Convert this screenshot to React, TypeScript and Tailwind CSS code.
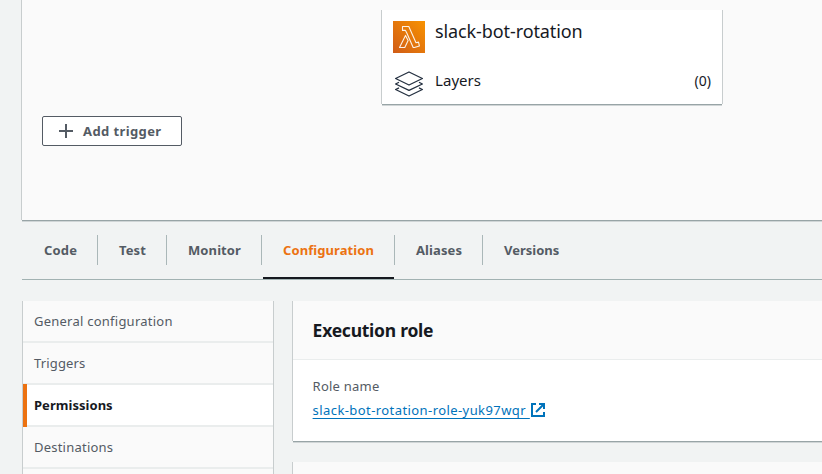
const shadow =
  "shadow-[0_1px_0_0_#98a4a6,0_2px_0_0_#d0d5d6,1px_0_0_0_#c8cdce,-1px_0_0_0_#c8cdce]";

function LambdaIcon() {
  return (
    <svg width="32" height="32" viewBox="0 0 32 32" className="block shrink-0">
      <defs>
        <linearGradient id="lambda" x1="0" y1="1" x2="1" y2="0">
          <stop offset="0" stopColor="#d05c17" />
          <stop offset="1" stopColor="#f89200" />
        </linearGradient>
      </defs>
      <rect width="32" height="32" fill="url(#lambda)" />
      <path
        d="M9.5 5.5h6.3l7.2 16.2 2.5-.6.9 3.8-5 1.6h-1.2L13.8 12l-1.3-2.6h-3zM12.5 14.4l2.6 5.2-3.3 6.9H6.5z"
        fill="none"
        stroke="#fff"
        strokeOpacity=".9"
        strokeWidth="1.1"
        strokeLinejoin="round"
      />
    </svg>
  );
}

function LayersIcon() {
  return (
    <svg width="30" height="26" viewBox="0 0 30 26" className="block shrink-0" fill="none" stroke="#243040" strokeWidth="1.3" strokeLinejoin="round">
      <path d="M15 1 28.4 7.5 15 14 1.6 7.5z" />
      <path d="M5 11.2 1.6 13 15 19.3 28.4 13 25 11.2" />
      <path d="M5 16.8 1.6 18.5 15 25 28.4 18.5 25 16.8" />
    </svg>
  );
}

function ExternalIcon() {
  return (
    <svg width="14" height="14" viewBox="0 0 14 14" className="ml-px block shrink-0" fill="none" stroke="#0073bb" strokeWidth="2">
      <path d="M5 1H1v12h12V9" />
      <path d="M8 1h5v5M13 1 5 9" />
    </svg>
  );
}

const tabs = [
  { label: "Code", width: "w-[76px]", pad: "pl-[22px] tracking-[0.2px]" },
  { label: "Test", width: "w-[69px]", pad: "pl-[21px] tracking-[0.1px]" },
  { label: "Monitor", width: "w-[95px]", pad: "pl-[21px] tracking-[0.1px]" },
  { label: "Configuration", width: "w-[133px]", pad: "pl-[21px] tracking-[0.08px]", active: true },
  { label: "Aliases", width: "w-[88px]", pad: "pl-[21px] tracking-[0.1px]" },
  { label: "Versions", width: "w-[100px]", pad: "pl-[21px]", last: true },
];

const sections = [
  { label: "General configuration", tracking: "tracking-[0.24px]" },
  { label: "Triggers", tracking: "tracking-[0.15px]" },
  { label: "Permissions", tracking: "tracking-[0.04px]", active: true },
  { label: "Destinations", tracking: "tracking-[0.22px]" },
];

export default function App() {
  return (
    <div className="flex h-[474px] w-[822px] flex-col overflow-hidden bg-[#f1f3f3] font-['Noto_Sans',sans-serif] text-[#16191f]">
      <section className={`ml-[22px] h-[220px] shrink-0 bg-[#fafafa] pt-[10px] ${shadow}`}>
        <div className={`ml-[360px] h-[94px] w-[340px] bg-white px-[11px] pt-[11px] ${shadow}`}>
          <div className="flex h-8">
            <LambdaIcon />
            <span className="ml-[10px] whitespace-nowrap text-[18px] leading-[20px] tracking-[-0.1px]">slack-bot-rotation</span>
          </div>
          <div className="mt-[18px] flex h-[26px]">
            <div className="ml-px w-[41px]"><LayersIcon /></div>
            <span className="text-[15px] leading-[18px] tracking-[0.05px]">Layers</span>
            <span className="ml-auto text-[14px] leading-[20px]">(0)</span>
          </div>
        </div>
        <button className="mt-[12px] ml-5 flex h-[30px] w-[140px] items-center rounded-[2px] border border-[#545b64] bg-white pl-4 text-[13px] font-bold text-[#545b64]">
          <svg width="14" height="14" viewBox="0 0 14 14" className="mr-[10px]" stroke="#545b64" strokeWidth="2">
            <path d="M7 0v14M0 7h14" />
          </svg>
          <span className="pt-[2px] whitespace-nowrap tracking-[0.4px]">Add trigger</span>
        </button>
      </section>

      <nav className="mt-[15px] ml-[22px] flex h-[45px] shrink-0 border-b border-[#a2b2b2] text-[13px] font-bold text-[#545b64]">
        {tabs.map((t) => (
          <div key={t.label} className={`flex h-[44px] flex-col ${t.width}`}>
            <div className={`h-[30px] whitespace-nowrap leading-[30px] ${t.pad} ${t.last ? "" : "border-r border-[#aab7b8]"} ${t.active ? "text-[#ec7211]" : ""}`}>
              {t.label}
            </div>
            {t.active && <div className="mt-3 ml-px h-[2px] w-[131px] bg-[#16191f]" />}
          </div>
        ))}
      </nav>

      <main className="mt-[21px] ml-[23px] flex gap-5">
        <aside className={`h-[240px] w-[250px] shrink-0 bg-[#fafafa] text-[13px] ${shadow}`}>
          {sections.map((s) =>
            s.active ? (
              <div key={s.label} className="-mt-px h-[43px] border-l-4 border-[#ec7211] pt-px">
                <div className={`h-[42px] border-b-2 border-b-[#eaeded] bg-white pl-[7px] leading-[41px] font-bold ${s.tracking}`}>{s.label}</div>
              </div>
            ) : (
              <div key={s.label} className={`h-[42px] border-b-2 border-[#eaeded] pl-[11px] leading-[41px] text-[#545b64] ${s.tracking}`}>{s.label}</div>
            )
          )}
        </aside>
        <div className="flex grow flex-col gap-[21px]">
          <section className={`h-[140px] bg-white ${shadow}`}>
            <h2 className="h-[59px] border-b border-[#eaeded] bg-[#fafafa] pl-[19.6px] text-[17.5px] leading-[59px] font-bold tracking-[-0.25px]">Execution role</h2>
            <div className="pt-[16px] pl-[19.6px] text-[13px]">
              <div className="leading-[20px] tracking-[0.24px] text-[#545b64]">Role name</div>
              <a className="mt-[4px] flex items-center leading-[20px] text-[#0073bb]">
                <span className="whitespace-pre tracking-[0.42px] underline underline-offset-[3px]">{"slack-bot-rotation-role-yuk97wqr "}</span>
                <ExternalIcon />
              </a>
            </div>
          </section>
          <section className={`h-[80px] bg-[#fafafa] ${shadow}`} />
        </div>
      </main>
    </div>
  );
}
